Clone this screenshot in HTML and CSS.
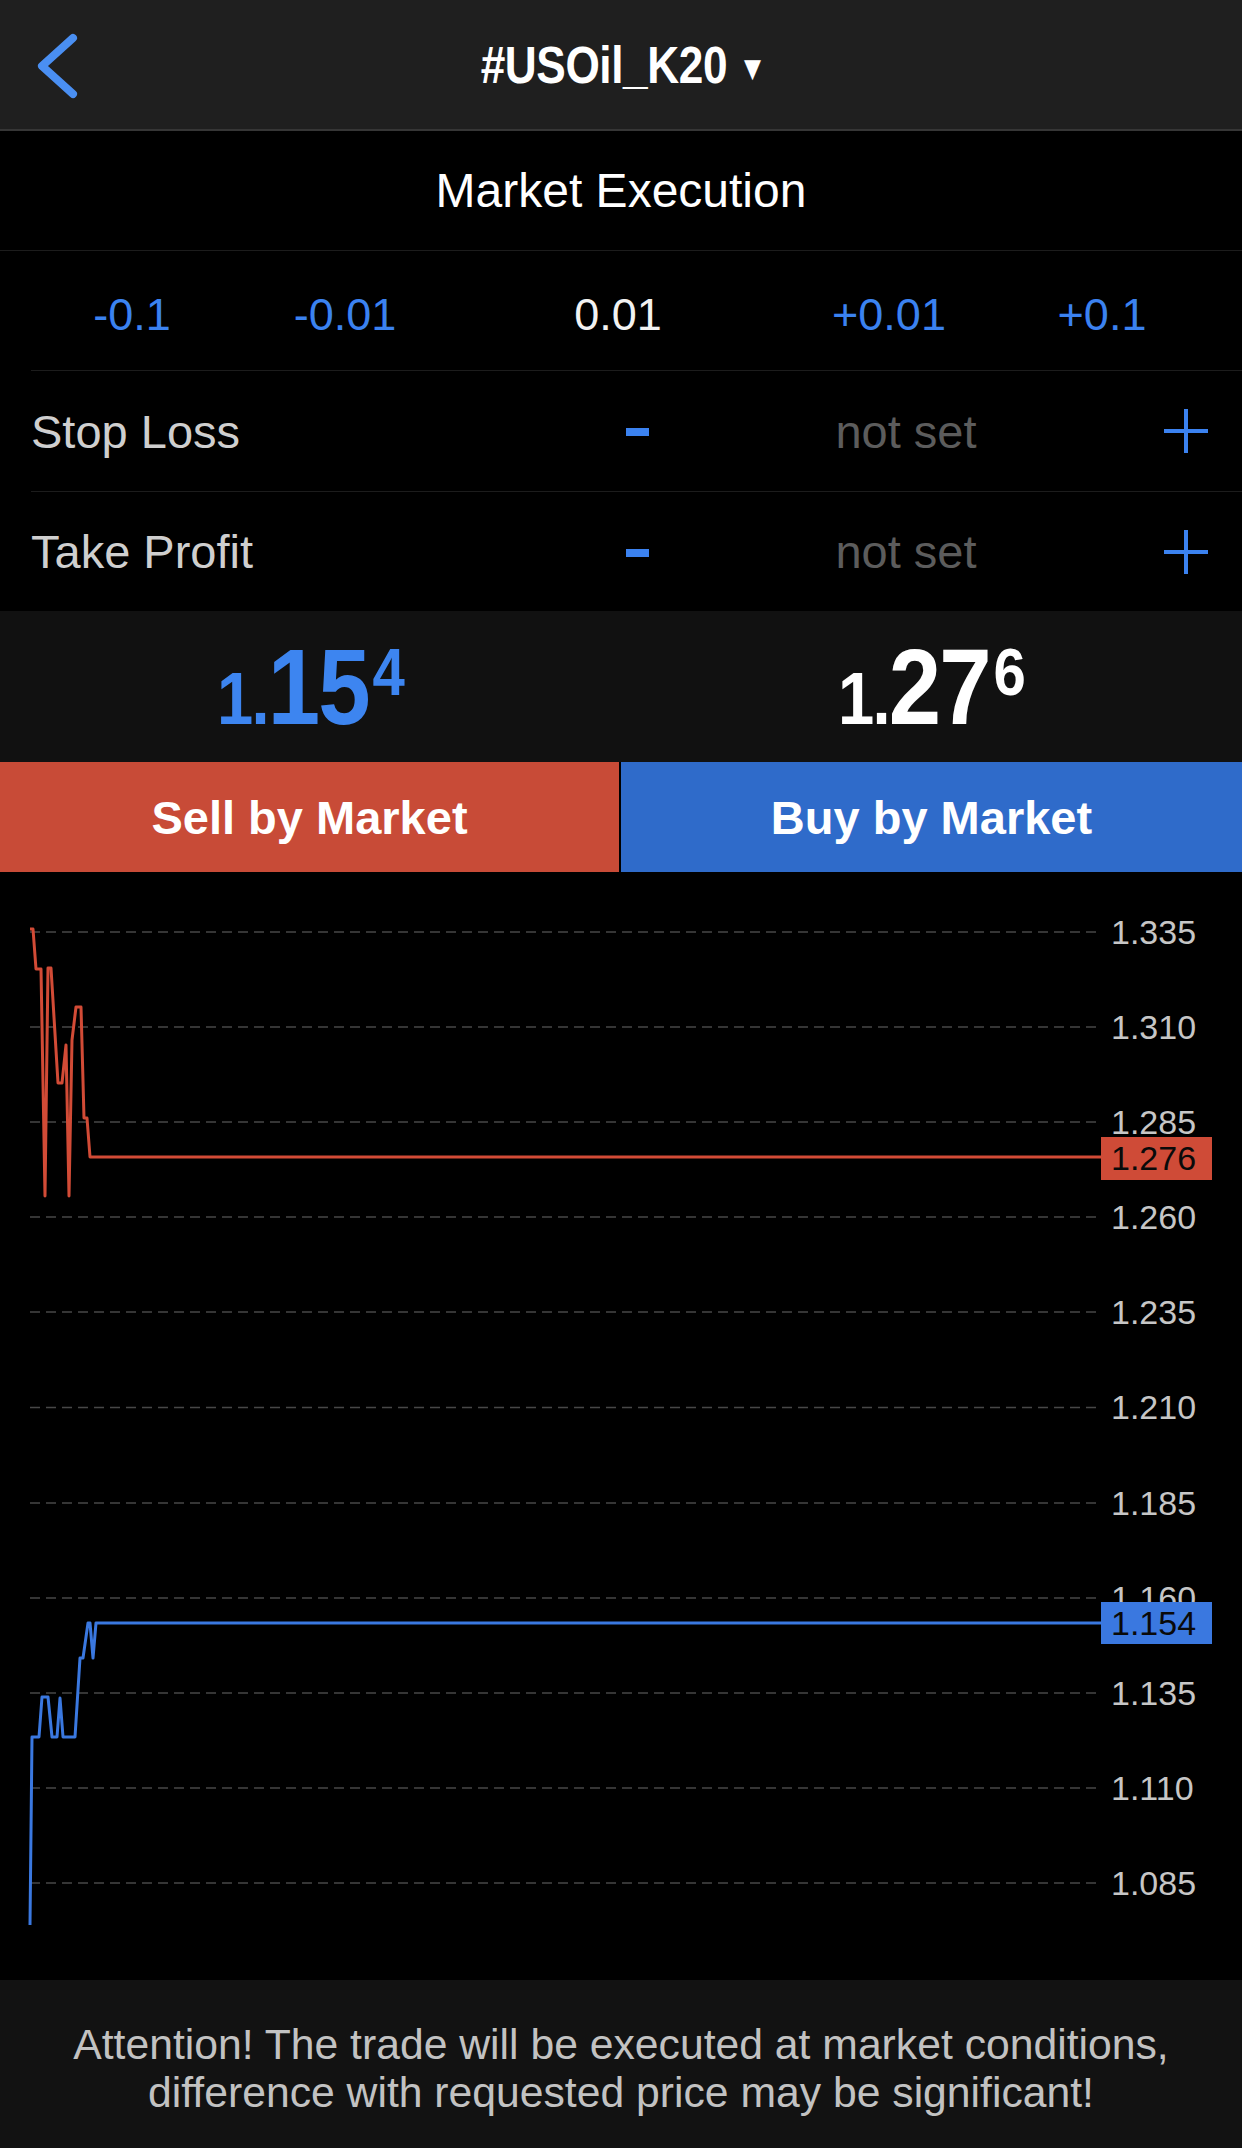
FILE: index.html
```html
<!DOCTYPE html>
<html lang="en">
<head>
    <meta charset="UTF-8">
    <meta name="viewport" content="width=device-width, initial-scale=1.0">
    <title>#USOil_K20 - Market Execution</title>
    <link rel="stylesheet" href="styles.css">
</head>
<body>
    <div class="screen">
        <!-- top bar -->
        <header class="topbar">
            <div class="back">
                <svg width="50" height="70" viewBox="0 0 50 70">
                    <polyline points="40,6 9,34 40,62" fill="none" stroke="#4a8ff2" stroke-width="8" stroke-linecap="round" stroke-linejoin="round"/>
                </svg>
            </div>
            <div class="symbol">#USOil_K20<span class="caret">&#9660;</span></div>
            <div></div>
        </header>

        <div class="exec-type">Market Execution</div>

        <!-- volume -->
        <div class="lots">
            <span class="lot-step">-0.1</span>
            <span class="lot-step">-0.01</span>
            <span class="lot-value">0.01</span>
            <span class="lot-step">+0.01</span>
            <span class="lot-step">+0.1</span>
        </div>

        <div class="form-row">
            <span class="row-label">Stop Loss</span>
            <span class="step-minus"><i></i></span>
            <span class="row-value">not set</span>
            <span class="step-plus">
                <svg width="44" height="44" viewBox="0 0 44 44">
                    <path d="M22 0V44M0 22H44" stroke="#3b82f0" stroke-width="4"/>
                </svg>
            </span>
        </div>
        <div class="form-row last">
            <span class="row-label">Take Profit</span>
            <span class="step-minus"><i></i></span>
            <span class="row-value">not set</span>
            <span class="step-plus">
                <svg width="44" height="44" viewBox="0 0 44 44">
                    <path d="M22 0V44M0 22H44" stroke="#3b82f0" stroke-width="4"/>
                </svg>
            </span>
        </div>

        <!-- bid / ask -->
        <div class="quotes">
            <div class="quote bid"><span class="q-small">1.</span><span class="q-big">15</span><span class="q-sup">4</span></div>
            <div class="quote ask"><span class="q-small">1.</span><span class="q-big">27</span><span class="q-sup">6</span></div>
        </div>

        <div class="actions">
            <button class="btn sell">Sell by Market</button>
            <button class="btn buy">Buy by Market</button>
        </div>

        <!-- tick chart -->
        <div class="chart">
            <svg width="1242" height="1108" viewBox="0 0 1242 1108">
                <g class="grid" stroke="#474747" stroke-width="1.5" stroke-dasharray="10 6">
                    <line x1="30" y1="60" x2="1101" y2="60"/>
                    <line x1="30" y1="155" x2="1101" y2="155"/>
                    <line x1="30" y1="250" x2="1101" y2="250"/>
                    <line x1="30" y1="345" x2="1101" y2="345"/>
                    <line x1="30" y1="440" x2="1101" y2="440"/>
                    <line x1="30" y1="535.5" x2="1101" y2="535.5"/>
                    <line x1="30" y1="631" x2="1101" y2="631"/>
                    <line x1="30" y1="726" x2="1101" y2="726"/>
                    <line x1="30" y1="821" x2="1101" y2="821"/>
                    <line x1="30" y1="916" x2="1101" y2="916"/>
                    <line x1="30" y1="1011" x2="1101" y2="1011"/>
                </g>
                <g class="axis" fill="#c6c6c6">
                    <text x="1111" y="72">1.335</text>
                    <text x="1111" y="167">1.310</text>
                    <text x="1111" y="262">1.285</text>
                    <text x="1111" y="357">1.260</text>
                    <text x="1111" y="452">1.235</text>
                    <text x="1111" y="547">1.210</text>
                    <text x="1111" y="643">1.185</text>
                    <text x="1111" y="738">1.160</text>
                    <text x="1111" y="833">1.135</text>
                    <text x="1111" y="928">1.110</text>
                    <text x="1111" y="1023">1.085</text>
                </g>
                <polyline fill="none" stroke="#d24b36" stroke-width="3" stroke-linejoin="round"
                    points="30,57 33,57 36,97 41,97 45,324 48,96 51,96 58,211 62,211 66,173 69,324 72,168 76,135 81,135 84,246 87,246 90,285 1101,285"/>
                <polyline fill="none" stroke="#3a78e0" stroke-width="3" stroke-linejoin="round"
                    points="30,1053 32,865 39,865 42,825 48,825 52,865 57,865 60,826 63,865 75,865 80,786 83,786 88,751 90,751 93,786 96,751 1101,751"/>
                <rect x="1101" y="265" width="111" height="43" fill="#cf4b37"/>
                <text class="tag" x="1111" y="298">1.276</text>
                <rect x="1101" y="730" width="111" height="42" fill="#3a78e0"/>
                <text class="tag" x="1111" y="763">1.154</text>
            </svg>
        </div>

        <footer class="notice">
            Attention! The trade will be executed at market conditions,<br>
            difference with requested price may be significant!
        </footer>
    </div>
</body>
</html>
```

FILE: styles.css
```css
* {
    margin: 0;
    padding: 0;
    box-sizing: border-box;
}

body {
    font-family: 'Liberation Sans', Arial, sans-serif;
    background-color: #000;
    color: #fff;
}

.screen {
    width: 1242px;
    height: 2148px;
    display: flex;
    flex-direction: column;
    background-color: #000;
}

/* top bar */
.topbar {
    height: 131px;
    display: grid;
    grid-template-columns: 1fr auto 1fr;
    align-items: center;
    background-color: #1f1f1f;
    border-bottom: 2px solid #363636;
}

.back {
    padding-left: 33px;
    padding-top: 4px;
}

.back svg {
    display: block;
}

/* no narrow face installed, so squeeze the bold one */
.symbol {
    font-weight: bold;
    font-size: 52px;
    letter-spacing: -0.5px;
    transform: scaleX(0.85);
}

.caret {
    font-family: 'DejaVu Sans', sans-serif;
    font-size: 26px;
    margin-left: 20px;
    vertical-align: 6px;
}

.exec-type {
    height: 120px;
    display: flex;
    align-items: center;
    justify-content: center;
    font-size: 48px;
    border-bottom: 1px solid #1c1c1c;
}

/* volume steps */
.lots {
    height: 120px;
    margin-left: 31px;
    display: grid;
    grid-template-columns: 202px 224px 322px 220px 206px;
    align-items: center;
    text-align: center;
    font-size: 45px;
    padding-top: 9px;
    border-bottom: 1px solid #1c1c1c;
}

.lot-step {
    color: #3b82f0;
}

.lot-value {
    color: #f2f2f2;
}

/* sl / tp */
.form-row {
    height: 121px;
    margin-left: 31px;
    padding-right: 24px;
    display: flex;
    align-items: center;
    font-size: 47px;
    border-bottom: 1px solid #1c1c1c;
}

.form-row.last {
    height: 119px;
    border-bottom: none;
}

.row-label {
    flex: 1;
    color: #cfcfcf;
}

.step-minus {
    width: 60px;
    display: flex;
    justify-content: center;
}

.step-minus i {
    display: block;
    width: 23px;
    height: 8px;
    background-color: #3b82f0;
    margin-top: 2px;
}

.row-value {
    width: 200px;
    margin-left: 139px;
    text-align: center;
    color: #5c5c5c;
}

.step-plus {
    width: 64px;
    margin-left: 148px;
    display: flex;
    justify-content: center;
}

.step-plus svg {
    display: block;
}

/* prices */
.quotes {
    height: 151px;
    display: grid;
    grid-template-columns: 620px 1fr;
    background-color: #111;
}

.quote {
    display: flex;
    justify-content: center;
    align-items: center;
    font-weight: bold;
    line-height: 1;
    padding-top: 2px;
    letter-spacing: -2px;
    transform: scaleX(0.88);
}

.quote > span {
    display: inline-block;
}

.q-small {
    font-size: 74px;
    align-self: center;
    padding-top: 23px;
}

.q-big {
    font-size: 107px;
}

.q-sup {
    font-size: 66px;
    align-self: center;
    margin-top: -31px;
    margin-left: 4px;
}

.bid {
    color: #3d85f0;
}

.ask {
    color: #fff;
}

/* buttons */
.actions {
    height: 110px;
    display: grid;
    grid-template-columns: 619px 1fr;
    column-gap: 2px;
    background-color: #000;
}

.btn {
    border: none;
    font-family: inherit;
    font-size: 47px;
    font-weight: bold;
    color: #fff;
    cursor: pointer;
}

.sell {
    background-color: #c84b37;
}

.buy {
    background-color: #2f6bca;
}

/* chart */
.chart {
    height: 1108px;
    background-color: #000;
}

.chart svg {
    display: block;
}

.axis text,
.tag {
    font-family: 'Liberation Sans', Arial, sans-serif;
    font-size: 34px;
}

.tag {
    fill: #0a0a0a;
}

.notice {
    flex: 1;
    background-color: #121212;
    color: #c2c2c2;
    font-size: 42.7px;
    line-height: 48px;
    text-align: center;
    padding-top: 40px;
}
```
